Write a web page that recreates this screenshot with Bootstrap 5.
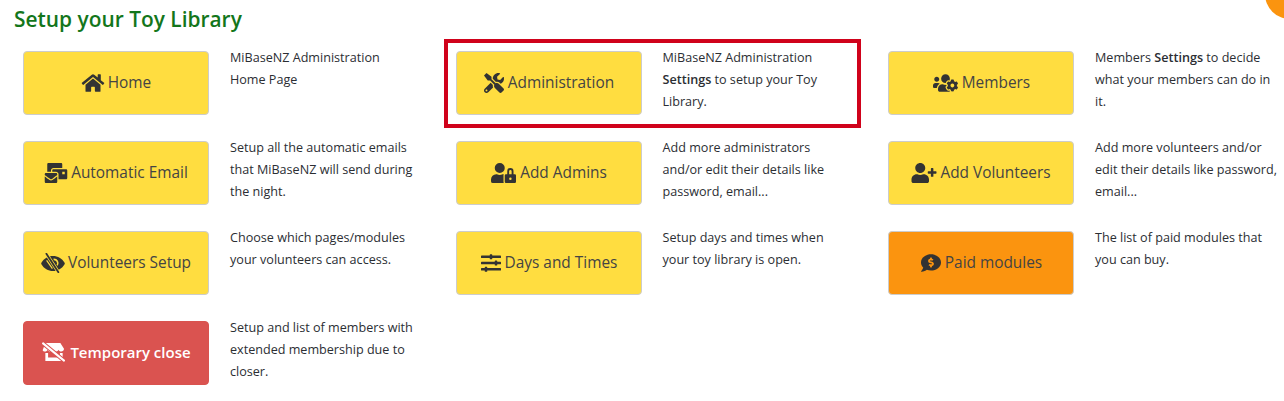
<!DOCTYPE html>
<html lang="en">
<head>
  <meta charset="UTF-8">
  <title>Setup your Toy Library</title>
  <link href="https://cdn.jsdelivr.net/npm/bootstrap@5.3.3/dist/css/bootstrap.min.css" rel="stylesheet">
  <style>
    body {
      font-family: "Open Sans", sans-serif;
      color: #2b2e33;
      overflow: hidden;
    }
    .setup-title {
      font-size: 20.9px;
      font-weight: 600;
      line-height: 27px;
      color: #13761b;
      margin: 6px 0 0 14px;
    }
    .setup-grid {
      display: grid;
      grid-template-columns: repeat(3, 432.5px);
      grid-auto-rows: 90px;
      margin: 14px 0 0 23px;
    }
    .setup-btn {
      width: 186px;
      height: 64px;
      margin-top: 4px;
      padding: 0;
      font-size: 15.4px;
      gap: 3px;
      color: #444;
      border: 1px solid #ccc;
      border-radius: 4px;
      flex: none;
    }
    .setup-btn svg { fill: #333; height: 20px; flex: none; }
    .btn-yellow { background: #ffdd40; }
    .btn-orange { background: #fb940f; }
    .btn-red { background: #da5350; border-color: #d9534f; color: #fff; font-size: 15px; font-weight: 600; padding-bottom: 2px; }
    .btn-red svg { fill: #fff; }
    .setup-desc {
      width: 185px;
      margin: 0 0 0 21px;
      font-size: 12.6px;
      line-height: 22px;
    }
    .setup-desc strong { font-weight: 600; }
    .callout-box {
      position: absolute;
      left: 444px;
      top: 39px;
      width: 417px;
      height: 89px;
      border: 4px solid #d0021b;
      pointer-events: none;
    }
    .corner-dot {
      position: absolute;
      left: 1265px;
      top: -31px;
      width: 50px;
      height: 50px;
      border-radius: 50%;
      background: #fb940f;
    }
  </style>
</head>
<body class="position-relative">

<div class="corner-dot"></div>
<h1 class="setup-title">Setup your Toy Library</h1>

<div class="setup-grid">
  <div class="d-flex align-items-start">
    <a href="#" class="btn setup-btn btn-yellow d-flex align-items-center justify-content-center">
      <svg viewBox="0 0 576 512" style="width:24px"><path d="M280.37 148.26L96 300.11V464a16 16 0 0 0 16 16l112.06-.29a16 16 0 0 0 15.92-16V368a16 16 0 0 1 16-16h64a16 16 0 0 1 16 16v95.64a16 16 0 0 0 16 16.05L464 480a16 16 0 0 0 16-16V300L295.67 148.26a12.19 12.19 0 0 0-15.3 0zM571.6 251.47L488 182.56V44.05a12 12 0 0 0-12-12h-56a12 12 0 0 0-12 12v72.61L318.47 43a48 48 0 0 0-61 0L4.34 251.47a12 12 0 0 0-1.6 16.9l25.5 31A12 12 0 0 0 45.15 301l235.22-193.74a12.19 12.19 0 0 1 15.3 0L530.9 301a12 12 0 0 0 16.9-1.6l25.5-31a12 12 0 0 0-1.7-16.93z"/></svg>
      <span>Home</span>
    </a>
    <p class="setup-desc">MiBaseNZ Administration Home Page</p>
  </div>
  <div class="d-flex align-items-start">
    <a href="#" class="btn setup-btn btn-yellow d-flex align-items-center justify-content-center">
      <svg viewBox="0 0 512 512" style="width:22px"><path d="M501.1 395.7L384 278.6c-23.1-23.1-57.6-27.6-85.4-13.9L192 158.1V96L64 0 0 64l96 128h62.1l106.6 106.6c-13.6 27.8-9.2 62.3 13.9 85.4l117.1 117.1c14.6 14.6 38.2 14.6 52.7 0l52.7-52.7c14.5-14.6 14.5-38.2-.1-52.7zM331.7 225c28.3 0 54.9 11 74.9 31l19.4 19.4c15.8-6.9 30.8-16.5 43.8-29.5 37.1-37.1 49.7-89.3 37.9-136.7-2.2-9-13.5-12.1-20.1-5.5l-74.4 74.4-67.9-11.3L334 98.9l74.4-74.4c6.6-6.6 3.4-17.9-5.7-20.2-47.4-11.7-99.6.9-136.6 37.9-28.5 28.5-41.9 66.1-41.2 103.6l82.1 82.1c8.1-1.9 16.5-2.9 24.7-2.9zm-103.9 82l-56.7-56.7L18.7 402.8c-25 25-25 65.5 0 90.5s65.5 25 90.5 0l123.6-123.6c-7.6-19.9-9.9-41.6-5-62.7zM64 472c-13.2 0-24-10.8-24-24 0-13.3 10.7-24 24-24s24 10.7 24 24c0 13.2-10.7 24-24 24z"/></svg>
      <span>Administration</span>
    </a>
    <p class="setup-desc">MiBaseNZ Administration <strong>Settings</strong> to setup your Toy Library.</p>
  </div>
  <div class="d-flex align-items-start">
    <a href="#" class="btn setup-btn btn-yellow d-flex align-items-center justify-content-center">
      <svg viewBox="0 0 640 512" style="width:27px"><path d="M610.5 341.3c2.6-14.1 2.6-28.5 0-42.6l25.8-14.9c3-1.7 4.3-5.2 3.3-8.5-6.7-21.6-18.2-41.2-33.2-57.4-2.3-2.5-6-3.1-9-1.4l-25.8 14.9c-10.9-9.3-23.4-16.5-36.9-21.3v-29.8c0-3.4-2.4-6.4-5.7-7.1-22.3-5-45-4.8-66.2 0-3.3.7-5.7 3.7-5.7 7.1v29.8c-13.5 4.8-26 12-36.9 21.3l-25.8-14.9c-2.9-1.7-6.7-1.1-9 1.4-15 16.2-26.5 35.8-33.2 57.4-1 3.3.4 6.8 3.3 8.5l25.8 14.9c-2.6 14.1-2.6 28.5 0 42.6l-25.8 14.9c-3 1.7-4.3 5.2-3.3 8.5 6.7 21.6 18.2 41.1 33.2 57.4 2.3 2.5 6 3.1 9 1.4l25.8-14.9c10.9 9.3 23.4 16.5 36.9 21.3v29.8c0 3.4 2.4 6.4 5.7 7.1 22.3 5 45 4.8 66.2 0 3.3-.7 5.7-3.7 5.7-7.1v-29.8c13.5-4.8 26-12 36.9-21.3l25.8 14.9c2.9 1.7 6.7 1.1 9-1.4 15-16.2 26.5-35.8 33.2-57.4 1-3.3-.4-6.8-3.3-8.5l-25.8-14.9zM496 368.5c-26.8 0-48.5-21.8-48.5-48.5s21.8-48.5 48.5-48.5 48.5 21.8 48.5 48.5-21.7 48.5-48.5 48.5zM96 224c35.3 0 64-28.7 64-64s-28.7-64-64-64-64 28.7-64 64 28.7 64 64 64zm224 32c1.9 0 3.7-.5 5.6-.6 8.3-21.7 20.5-42.1 36.3-59.2 7.4-8 17.9-12.6 28.9-12.6 6.9 0 13.7 1.8 19.6 5.3l7.9 4.6c.8-.5 1.6-.9 2.4-1.4 7-14.6 11.2-30.8 11.2-48 0-61.9-50.1-112-112-112S208 82.1 208 144c0 61.9 50.1 112 112 112zm105.2 194.5c-2.3-1.2-4.6-2.6-6.8-3.9-8.2 4.8-15.3 9.8-27.5 9.8-10.9 0-21.4-4.6-28.9-12.6-18.3-19.8-32.3-43.9-40.2-69.6-10.7-34.5 24.9-49.7 25.8-50.3-.1-2.6-.1-5.2 0-7.8l-7.9-4.6c-3.8-2.2-7-5-9.8-8.1-3.3.2-6.5.6-9.8.6-24.6 0-47.6-6-68.5-16h-8.3C179.6 288 128 339.6 128 403.2V432c0 26.5 21.5 48 48 48h255.4c-3.7-6-6.2-12.8-6.2-20.3v-9.2zM173.1 274.6C161.5 263.1 145.6 256 128 256H64c-35.3 0-64 28.7-64 64v32c0 17.7 14.3 32 32 32h65.9c6.3-47.4 34.9-87.3 75.2-109.4z"/></svg>
      <span>Members</span>
    </a>
    <p class="setup-desc">Members <strong>Settings</strong> to decide what your members can do in it.</p>
  </div>

  <div class="d-flex align-items-start">
    <a href="#" class="btn setup-btn btn-yellow d-flex align-items-center justify-content-center">
      <svg viewBox="0 0 576 512" style="width:24px"><path d="M160 448c-25.6 0-51.2-22.4-64-32-64-44.8-83.2-60.8-96-70.4V480c0 17.67 14.33 32 32 32h256c17.67 0 32-14.33 32-32V345.6c-12.8 9.6-32 25.6-96 70.4-12.8 9.6-38.4 32-64 32zm128-192H32c-17.67 0-32 14.33-32 32v16c25.6 19.2 22.4 19.2 115.2 86.4 9.6 6.4 28.8 25.6 44.8 25.6s35.2-19.2 44.8-22.4c92.8-67.2 89.6-67.2 115.2-86.4V288c0-17.67-14.33-32-32-32zm256-96H224c-17.67 0-32 14.33-32 32v32h96c33.21 0 60.59 25.42 63.71 57.82l.29-.22V416h192c17.67 0 32-14.33 32-32V192c0-17.67-14.33-32-32-32zm-32 128h-64v-64h64v64zm-352-96c0-35.29 28.71-64 64-64h224V32c0-17.67-14.33-32-32-32H96C78.33 0 64 14.33 64 32v192h96v-32z"/></svg>
      <span>Automatic Email</span>
    </a>
    <p class="setup-desc">Setup all the automatic emails that MiBaseNZ will send during the night.</p>
  </div>
  <div class="d-flex align-items-start">
    <a href="#" class="btn setup-btn btn-yellow d-flex align-items-center justify-content-center">
      <svg viewBox="0 0 640 512" style="width:27px"><path d="M224 256A128 128 0 1 0 96 128a128 128 0 0 0 128 128zm96 64a63.08 63.08 0 0 1 8.1-30.5c-4.8-.5-9.5-1.5-14.5-1.5h-16.7a174.08 174.08 0 0 1-145.8 0h-16.7A134.43 134.43 0 0 0 0 422.4V464a48 48 0 0 0 48 48h280.9a63.54 63.54 0 0 1-8.9-32zm288-32h-32v-80a80 80 0 0 0-160 0v80h-32a32 32 0 0 0-32 32v160a32 32 0 0 0 32 32h224a32 32 0 0 0 32-32V320a32 32 0 0 0-32-32zM496 432a32 32 0 1 1 32-32 32 32 0 0 1-32 32zm32-144h-64v-80a32 32 0 0 1 64 0z"/></svg>
      <span>Add Admins</span>
    </a>
    <p class="setup-desc">Add more administrators and/or edit their details like password, email...</p>
  </div>
  <div class="d-flex align-items-start">
    <a href="#" class="btn setup-btn btn-yellow d-flex align-items-center justify-content-center">
      <svg viewBox="0 0 640 512" style="width:26px"><path d="M624 208h-64v-64c0-8.8-7.2-16-16-16h-32c-8.8 0-16 7.2-16 16v64h-64c-8.8 0-16 7.2-16 16v32c0 8.8 7.2 16 16 16h64v64c0 8.8 7.2 16 16 16h32c8.8 0 16-7.2 16-16v-64h64c8.8 0 16-7.2 16-16v-32c0-8.8-7.2-16-16-16zm-400 48c70.7 0 128-57.3 128-128S294.7 0 224 0 96 57.3 96 128s57.3 128 128 128zm89.6 32h-16.7c-22.2 10.2-46.9 16-72.9 16s-50.6-5.8-72.9-16h-16.7C60.2 288 0 348.2 0 422.4V464c0 26.5 21.5 48 48 48h352c26.5 0 48-21.5 48-48v-41.6c0-74.2-60.2-134.4-134.4-134.4z"/></svg>
      <span>Add Volunteers</span>
    </a>
    <p class="setup-desc">Add more volunteers and/or edit their details like password, email...</p>
  </div>

  <div class="d-flex align-items-start">
    <a href="#" class="btn setup-btn btn-yellow d-flex align-items-center justify-content-center">
      <svg viewBox="0 0 24 20" style="width:24px">
        <path d="M.4 9.700C3 5.300 7.200 3 12 3s9 2.300 11.600 6.700c.3.500.3 1 0 1.500C21 15.600 16.800 18 12 18S3 15.600.4 11.200c-.3-.5-.3-1 0-1.500z"/>
        <path d="M8.800 5.600l7 10M5.600 7.400l5.800 8.200" stroke="#ffdd40" stroke-width="1.200" fill="none"/>
        <path d="M12.600 6.400a3.900 3.900 0 0 1 3.600 6" stroke="#ffdd40" stroke-width="1.600" fill="none"/>
        <path d="M5.400 .8l12 18.400" stroke="#ffdd40" stroke-width="3.200" fill="none"/>
        <path d="M5.400 .8l12 18.400" stroke="#333" stroke-width="1.800" stroke-linecap="round" fill="none"/>
      </svg>
      <span>Volunteers Setup</span>
    </a>
    <p class="setup-desc">Choose which pages/modules your volunteers can access.</p>
  </div>
  <div class="d-flex align-items-start">
    <a href="#" class="btn setup-btn btn-yellow d-flex align-items-center justify-content-center">
      <svg viewBox="0 0 512 512" style="width:22px"><path d="M496 384H160v-16c0-8.800-7.200-16-16-16h-32c-8.800 0-16 7.200-16 16v16H16c-8.800 0-16 7.200-16 16v32c0 8.800 7.200 16 16 16h80v16c0 8.800 7.200 16 16 16h32c8.800 0 16-7.200 16-16v-16h336c8.800 0 16-7.200 16-16v-32c0-8.800-7.200-16-16-16zm0-160h-80v-16c0-8.800-7.200-16-16-16h-32c-8.800 0-16 7.200-16 16v16H16c-8.800 0-16 7.200-16 16v32c0 8.800 7.200 16 16 16h336v16c0 8.800 7.200 16 16 16h32c8.800 0 16-7.200 16-16v-16h80c8.800 0 16-7.200 16-16v-32c0-8.800-7.200-16-16-16zm0-160H288V48c0-8.800-7.200-16-16-16h-32c-8.800 0-16 7.200-16 16v16H16C7.200 64 0 71.200 0 80v32c0 8.800 7.200 16 16 16h208v16c0 8.800 7.200 16 16 16h32c8.800 0 16-7.200 16-16v-16h208c8.800 0 16-7.200 16-16V80c0-8.800-7.200-16-16-16z"/></svg>
      <span>Days and Times</span>
    </a>
    <p class="setup-desc">Setup days and times when your toy library is open.</p>
  </div>
  <div class="d-flex align-items-start">
    <a href="#" class="btn setup-btn btn-orange d-flex align-items-center justify-content-center">
      <svg viewBox="0 0 512 512" style="width:22px"><path d="M256 32C114.620 32 0 125.120 0 240c0 49.560 21.410 95.010 57.020 130.740C44.460 421.050 2.700 465.970 2.200 466.500A7.995 7.995 0 0 0 8 480c66.260 0 115.990-31.750 140.600-51.380C181.290 440.930 217.590 448 256 448c141.380 0 256-93.120 256-208S397.380 32 256 32zm24 302.440V352c0 8.840-7.160 16-16 16h-16c-8.840 0-16-7.160-16-16v-17.730c-11.420-1.350-22.280-5.190-31.780-11.460-6.220-4.110-6.820-13.110-1.550-18.380l17.520-17.520c3.740-3.740 9.310-4.240 14.110-2.030 3.180 1.460 6.660 2.220 10.260 2.220h32.780c4.660 0 8.440-3.780 8.440-8.420 0-3.750-2.520-7.080-6.120-8.110l-50.070-14.300c-22.250-6.350-40.010-24.710-42.910-47.670-4.050-32.070 19.030-59.430 49.320-63.050V128c0-8.840 7.160-16 16-16h16c8.840 0 16 7.160 16 16v17.730c11.420 1.350 22.280 5.190 31.780 11.460 6.220 4.110 6.820 13.110 1.550 18.380l-17.520 17.520c-3.740 3.740-9.310 4.240-14.110 2.030a24.522 24.522 0 0 0-10.260-2.220h-32.780c-4.660 0-8.440 3.780-8.440 8.420 0 3.750 2.520 7.080 6.120 8.110l50.070 14.300c22.250 6.350 40.010 24.710 42.910 47.670 4.050 32.070-19.030 59.430-49.320 63.050z"/></svg>
      <span>Paid modules</span>
    </a>
    <p class="setup-desc">The list of paid modules that you can buy.</p>
  </div>

  <div class="d-flex align-items-start">
    <a href="#" class="btn setup-btn btn-red d-flex align-items-center justify-content-center">
      <svg viewBox="0 0 26 22" style="width:26px">
        <path d="M3.500 1h16.500l4 6.500c0 2-1.500 3-3 3s-2.500-.8-3-2c-.5 1.200-1.500 2-3 2s-2.500-.8-3-2c-.5 1.200-1.500 2-3 2s-2.500-.8-3-2c-.5 1.200-1.500 2-3 2-1.200 0-2-.6-2.500-1.500z"/>
        <path d="M3.500 12h3v5h10l3-2v-3h3v9h-19z"/>
        <path d="M1 1.500l23 19" stroke="#da5350" stroke-width="4.500" fill="none"/>
        <path d="M1 1.500l23 19" stroke="#fff" stroke-width="2.200" stroke-linecap="round" fill="none"/>
      </svg>
      <span>Temporary close</span>
    </a>
    <p class="setup-desc">Setup and list of members with extended membership due to closer.</p>
  </div>
</div>

<div class="callout-box"></div>

<script src="https://cdn.jsdelivr.net/npm/bootstrap@5.3.3/dist/js/bootstrap.bundle.min.js"></script>
</body>
</html>
